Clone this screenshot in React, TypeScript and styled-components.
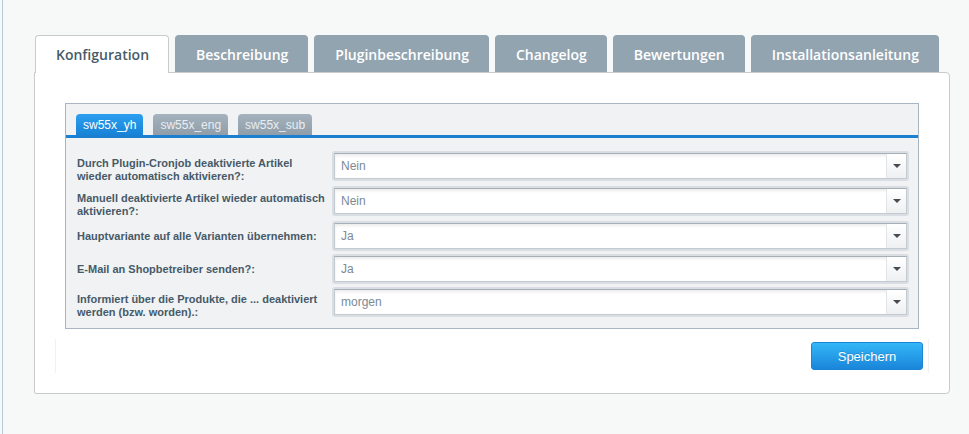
import * as React from "react";
import styled, { createGlobalStyle } from "styled-components";

const GlobalStyle = createGlobalStyle`
  html, body {
    margin: 0;
    padding: 0;
    background: #f7f8f8;
  }
  body {
    font-family: "Liberation Sans", Arial, sans-serif;
  }
`;

const SPage = styled.div`
  margin-left: 2px;
  min-height: 434px;
  box-sizing: border-box;
  border-left: 1px solid #b9c8d6;
  padding: 35px 19px 0 31px;
`;

const STabBar = styled.div`
  display: flex;
  gap: 6px;
  padding-left: 1px;
  position: relative;
  z-index: 1;
`;

const STab = styled.div<{ $active?: boolean }>`
  box-sizing: border-box;
  padding: 0 19px 0 20px;
  display: flex;
  align-items: center;
  border-radius: 4px 4px 0 0;
  font-family: "Open Sans", sans-serif;
  font-weight: 600;
  font-size: 14px;
  color: ${p => (p.$active ? "#475b69" : "#ffffff")};
  background: ${p => (p.$active ? "#ffffff" : "#93a4b1")};
  border: 1px solid ${p => (p.$active ? "#c8cacc" : "#93a4b1")};
  border-bottom: none;
  margin-bottom: ${p => (p.$active ? "-1px" : "0")};
  height: ${p => (p.$active ? "38px" : "37px")};
`;

const SPanel = styled.div`
  background: #ffffff;
  border: 1px solid #c8cacc;
  border-radius: 0 4px 4px 2px;
  padding: 30px 30px 20px 30px;
  height: 322px;
  box-sizing: border-box;
  display: flex;
  flex-direction: column;
`;

const SFieldset = styled.div`
  background: #f0f2f4;
  border: 1px solid #a9b6c1;
  padding-top: 10px;
  height: 228px;
  box-sizing: border-box;
`;

const SSubTabBar = styled.div`
  display: flex;
  gap: 10px;
  padding-left: 10px;
  border-bottom: 3px solid #1b7fd2;
`;

const SSubTab = styled.div<{ $active?: boolean }>`
  height: 21px;
  padding: 0 7px;
  display: flex;
  align-items: center;
  border-radius: 4px 4px 0 0;
  font-size: 12px;
  color: ${p => (p.$active ? "#ffffff" : "#e9eef2")};
  background: ${p =>
    p.$active
      ? "linear-gradient(#2d9ff0, #1783d6)"
      : "linear-gradient(#a5b2bd, #8f9eaa)"};
`;

const SForm = styled.div`
  display: flex;
  flex-direction: column;
  padding: 13px 9px 0 11px;
`;

const SRow = styled.div`
  display: flex;
  align-items: flex-start;
  margin-bottom: 3px;
`;

const SLabel = styled.div<{ $single?: boolean }>`
  width: 255px;
  box-sizing: border-box;
  padding-right: 6px;
  flex-shrink: 0;
  font-size: 11px;
  font-weight: bold;
  line-height: 13px;
  color: #475a68;
  padding-top: ${p => (p.$single ? "9px" : "6px")};
`;

const SSelectFrame = styled.div`
  flex: 1;
  height: 30px;
  box-sizing: border-box;
  padding: 2px;
  background: #dadee2;
  border-radius: 3px;
`;

const SSelectInner = styled.div`
  height: 100%;
  box-sizing: border-box;
  display: flex;
  background: #ffffff;
  border: 1px solid #c3cbd2;
  border-top-color: #a4afb8;
  box-shadow: inset 0 2px 3px rgba(0, 0, 0, 0.08);
`;

const SSelectValue = styled.div`
  flex: 1;
  display: flex;
  align-items: center;
  padding-left: 6px;
  font-size: 12px;
  color: #7b8a96;
`;

const STrigger = styled.div`
  width: 19px;
  border-left: 1px solid #e2e5e8;
  background: linear-gradient(#ffffff, #eef0f2);
  display: flex;
  align-items: center;
  justify-content: center;
  &::after {
    content: "";
    border-left: 4px solid transparent;
    border-right: 4px solid transparent;
    border-top: 4px solid #474c52;
  }
`;

const SToolbar = styled.div`
  margin: 10px -10px 0 -10px;
  height: 34px;
  border-left: 1px solid #f0f1f2;
  border-right: 1px solid #f0f1f2;
  display: flex;
  justify-content: flex-end;
  align-items: center;
  padding-right: 5px;
`;

const SButton = styled.button`
  width: 112px;
  height: 28px;
  border: 1px solid #1c84d6;
  border-radius: 3px;
  background: linear-gradient(#33b7f8, #1a85d9);
  color: #ffffff;
  font-family: "Liberation Sans", Arial, sans-serif;
  font-size: 13px;
  text-shadow: 0 -1px 0 rgba(0, 0, 0, 0.15);
  cursor: pointer;
`;

const tabs = [
  "Konfiguration",
  "Beschreibung",
  "Pluginbeschreibung",
  "Changelog",
  "Bewertungen",
  "Installationsanleitung",
];

const subTabs = ["sw55x_yh", "sw55x_eng", "sw55x_sub"];

const fields = [
  { label: "Durch Plugin-Cronjob deaktivierte Artikel wieder automatisch aktivieren?:", value: "Nein" },
  { label: "Manuell deaktivierte Artikel wieder automatisch aktivieren?:", value: "Nein" },
  { label: "Hauptvariante auf alle Varianten übernehmen:", value: "Ja", single: true },
  { label: "E-Mail an Shopbetreiber senden?:", value: "Ja", single: true },
  { label: "Informiert über die Produkte, die ... deaktiviert werden (bzw. worden).:", value: "morgen" },
];

const App = () => {
  return (
    <React.Fragment>
      <GlobalStyle />
      <SPage>
        <STabBar>
          {tabs.map((tab, i) => (
            <STab key={tab} $active={i === 0}>
              {tab}
            </STab>
          ))}
        </STabBar>
        <SPanel>
          <SFieldset>
            <SSubTabBar>
              {subTabs.map((tab, i) => (
                <SSubTab key={tab} $active={i === 0}>
                  {tab}
                </SSubTab>
              ))}
            </SSubTabBar>
            <SForm>
              {fields.map(field => (
                <SRow key={field.label}>
                  <SLabel $single={field.single}>{field.label}</SLabel>
                  <SSelectFrame>
                    <SSelectInner>
                      <SSelectValue>{field.value}</SSelectValue>
                      <STrigger />
                    </SSelectInner>
                  </SSelectFrame>
                </SRow>
              ))}
            </SForm>
          </SFieldset>
          <SToolbar>
            <SButton>{"Speichern"}</SButton>
          </SToolbar>
        </SPanel>
      </SPage>
    </React.Fragment>
  );
};

export default App;
